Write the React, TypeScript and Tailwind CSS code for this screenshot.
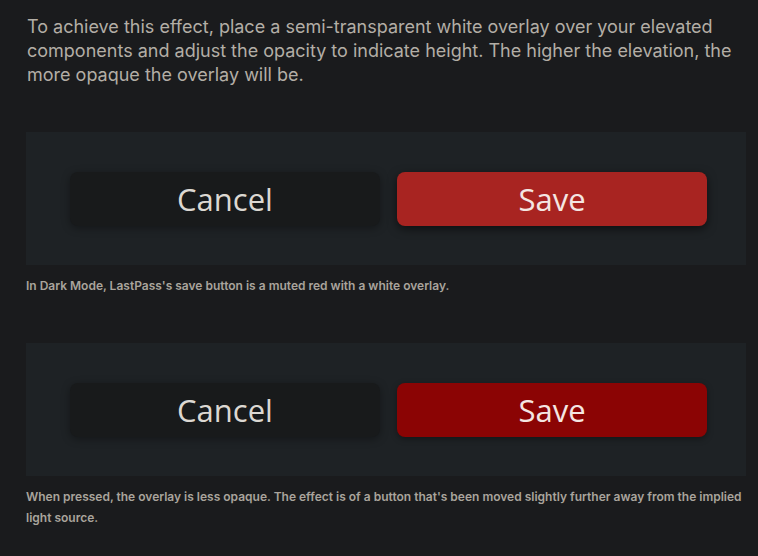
const btnText = "font-['Open_Sans',sans-serif] text-[31px] leading-none";

function ButtonPair({ pressed = false }: { pressed?: boolean }) {
  return (
    <div className="ml-[26px] w-[720px] h-[133px] bg-[#1e2225] flex items-center pl-[44px] gap-[17px]">
      <div className={`w-[310px] h-[54px] rounded-[8px] bg-[#181a1b] shadow-[0_2px_8px_rgba(0,0,0,0.35)] flex items-center justify-center pt-[2px] text-[#dcd8d2] ${btnText}`}>
        Cancel
      </div>
      <div
        className={`w-[310px] h-[54px] rounded-[8px] flex items-center justify-center pt-[2px] text-[#f4e6e2] ${btnText} ${
          pressed ? "bg-[#8b0404] shadow-[0_2px_6px_rgba(0,0,0,0.35)]" : "bg-[#a82421] shadow-[0_3px_10px_rgba(0,0,0,0.55)]"
        }`}
      >
        Save
      </div>
    </div>
  );
}

export default function App() {
  return (
    <div className="w-[758px] h-[556px] bg-[#1a1b1d] overflow-hidden font-['Inter',sans-serif]">
      <p className="pt-[15px] pl-[27px] pr-[14px] text-[18px] leading-[24px] text-[#b3aea6]">
        To achieve this effect, place a semi-transparent white overlay over your elevated components and adjust the opacity to indicate height. The higher the elevation, the more opaque the overlay will be.
      </p>
      <div className="mt-[45px]">
        <ButtonPair />
      </div>
      <p className="mt-[10px] pl-[26px] text-[12px] leading-[21px] font-semibold text-[#a9a49c]">
        In Dark Mode, LastPass's save button is a muted red with a white overlay.
      </p>
      <div className="mt-[47px]">
        <ButtonPair pressed />
      </div>
      <p className="mt-[10px] pl-[26px] pr-[10px] text-[12px] leading-[21px] font-semibold text-[#a9a49c]">
        When pressed, the overlay is less opaque. The effect is of a button that's been moved slightly further away from the implied light source.
      </p>
    </div>
  );
}
